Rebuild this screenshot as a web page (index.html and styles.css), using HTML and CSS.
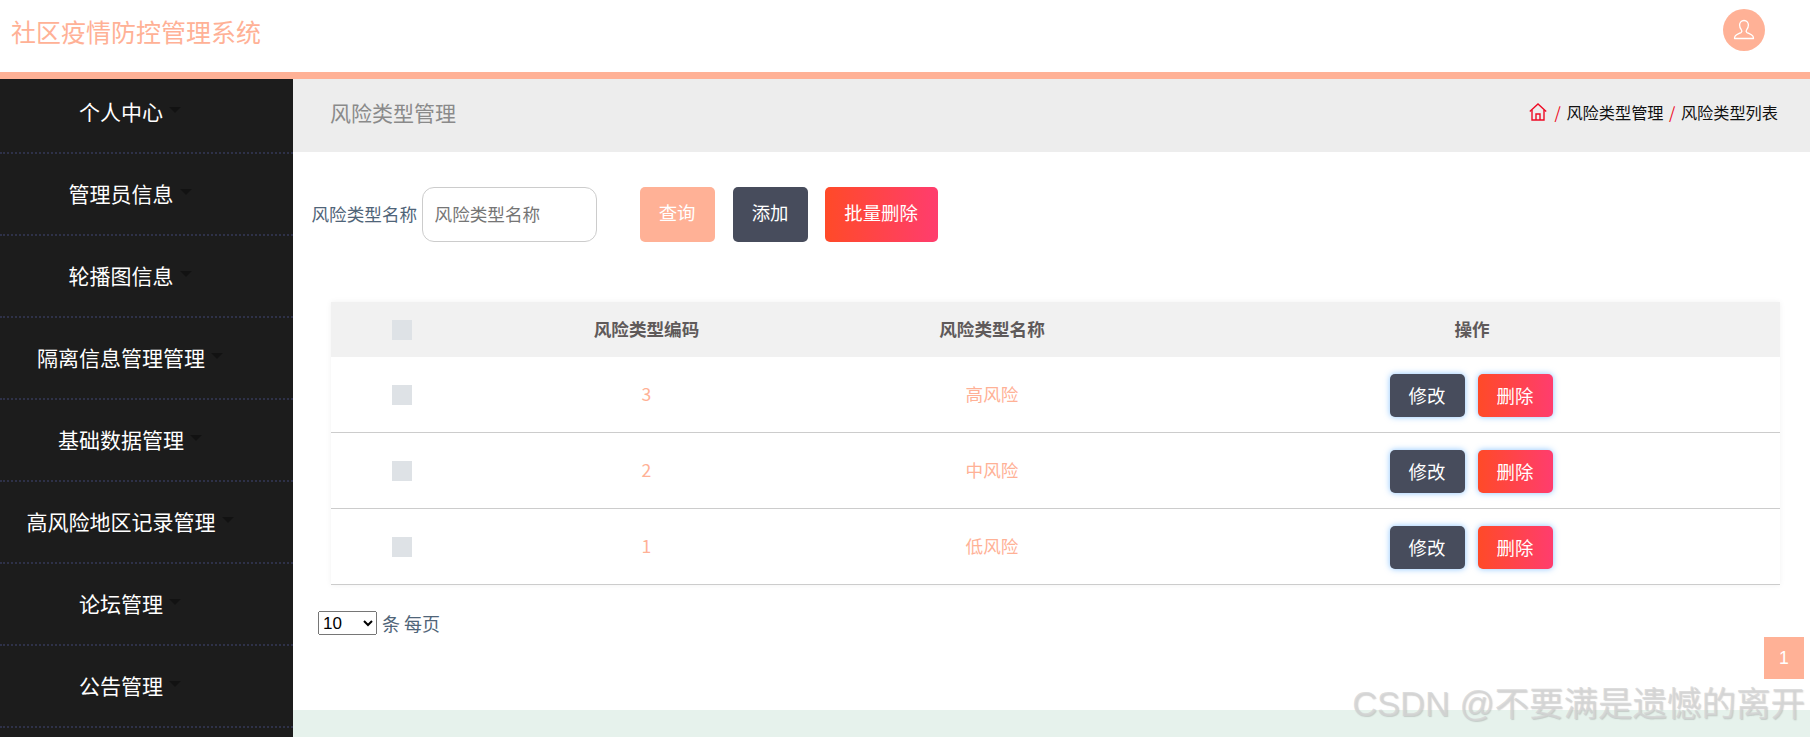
FILE: index.html
```html
<!DOCTYPE html>
<html>
<head>
    <meta charset="utf-8">
    <title>风险类型管理</title>
    <link rel="stylesheet" href="styles.css">
</head>
<body>
    <header class="top-bar">
        <div class="logo">社区疫情防控管理系统</div>
        <div class="avatar">
            <svg width="22" height="22" viewBox="0 0 22 22" fill="none" stroke="#fff" stroke-width="1.3" stroke-linejoin="round">
                <path d="M11 1.500c-2.800 0-4.400 2-4.400 4.600 0 2 .7 3.600 1.800 4.800.5.600.5 1.900-.2 2.500-1 .8-4.700 1.900-5.900 3.400-.6.800-.8 1.800-.8 2.700h19c0-.9-.2-1.900-.8-2.700-1.200-1.500-4.900-2.600-5.900-3.400-.7-.6-.7-1.900-.2-2.500 1.100-1.200 1.800-2.800 1.800-4.800 0-2.600-1.600-4.600-4.400-4.600z"/>
            </svg>
        </div>
    </header>
    <div class="layout">
        <aside class="sidebar">
            <ul class="menu">
                <li class="menu-item"><span>个人中心</span><i class="caret"></i></li>
                <li class="menu-item"><span>管理员信息</span><i class="caret"></i></li>
                <li class="menu-item"><span>轮播图信息</span><i class="caret"></i></li>
                <li class="menu-item"><span>隔离信息管理管理</span><i class="caret"></i></li>
                <li class="menu-item"><span>基础数据管理</span><i class="caret"></i></li>
                <li class="menu-item"><span>高风险地区记录管理</span><i class="caret"></i></li>
                <li class="menu-item"><span>论坛管理</span><i class="caret"></i></li>
                <li class="menu-item"><span>公告管理</span><i class="caret"></i></li>
            </ul>
        </aside>
        <main class="main">
            <div class="crumb-bar">
                <div class="page-title">风险类型管理</div>
                <div class="crumbs">
                    <svg class="home" width="18" height="18" viewBox="0 0 18 18" fill="none" stroke="#ee0a24" stroke-width="1.4">
                        <path d="M.8 8.600 9 1l8.200 7.600"/>
                        <path d="M3 7v10h12V7"/>
                        <path d="M7 17v-6h4v6"/>
                    </svg>
                    <span class="sep">/</span>
                    <span>风险类型管理</span>
                    <span class="sep">/</span>
                    <span>风险类型列表</span>
                </div>
            </div>
            <div class="content">
                <div class="filter">
                    <label class="filter-label">风险类型名称</label>
                    <input class="filter-input" type="text" placeholder="风险类型名称">
                    <button class="btn btn-query">查询</button>
                    <button class="btn btn-dark">添加</button>
                    <button class="btn btn-red btn-wide">批量删除</button>
                </div>
                <table class="data-table">
                    <colgroup>
                        <col class="col-check">
                        <col class="col-code">
                        <col class="col-name">
                        <col class="col-ops">
                    </colgroup>
                    <thead>
                        <tr>
                            <th><span class="check"></span></th>
                            <th>风险类型编码</th>
                            <th>风险类型名称</th>
                            <th>操作</th>
                        </tr>
                    </thead>
                    <tbody>
                        <tr>
                            <td><span class="check"></span></td>
                            <td>3</td>
                            <td>高风险</td>
                            <td class="ops"><button class="btn-row btn-dark">修改</button><button class="btn-row btn-red">删除</button></td>
                        </tr>
                        <tr>
                            <td><span class="check"></span></td>
                            <td>2</td>
                            <td>中风险</td>
                            <td class="ops"><button class="btn-row btn-dark">修改</button><button class="btn-row btn-red">删除</button></td>
                        </tr>
                        <tr>
                            <td><span class="check"></span></td>
                            <td>1</td>
                            <td>低风险</td>
                            <td class="ops"><button class="btn-row btn-dark">修改</button><button class="btn-row btn-red">删除</button></td>
                        </tr>
                    </tbody>
                </table>
                <div class="page-size">
                    <select class="size-select">
                        <option>10</option>
                        <option>20</option>
                        <option>50</option>
                    </select>
                    <span>条 每页</span>
                </div>
                <div class="pager"><span class="page-num">1</span></div>
            </div>
            <div class="foot-band"></div>
        </main>
    </div>
    <div class="watermark">CSDN @不要满是遗憾的离开</div>
</body>
</html>
```
FILE: styles.css
```css
* {
    box-sizing: border-box;
}
html, body {
    height: 737px;
    overflow: hidden;
}
body {
    margin: 0;
    background-color: #ffffff;
    font-family: "Noto Sans CJK SC", "Liberation Sans", sans-serif;
    color: #4f6478;
    position: relative;
}
.top-bar {
    position: relative;
    z-index: 2;
    display: flex;
    align-items: center;
    justify-content: space-between;
    height: 79px;
    padding: 0 45px 0 11px;
    background-color: #ffffff;
    border-bottom: 7px solid #ffb196;
}
.logo {
    font-size: 25px;
    line-height: 1;
    color: #ffb196;
    margin-top: -9px;
}
.avatar {
    display: flex;
    align-items: center;
    justify-content: center;
    width: 42px;
    height: 42px;
    border-radius: 50%;
    background-color: #ffb196;
    margin-top: -12px;
}
.layout {
    display: flex;
    height: 658px;
}
.sidebar {
    width: 293px;
    flex-shrink: 0;
    background-color: #1c1c1c;
}
.menu {
    list-style: none;
    margin: -7px 0 0;
    padding: 0;
}
.menu-item {
    display: flex;
    align-items: center;
    justify-content: center;
    height: 82px;
    padding: 0 33px 2px 0;
    border-bottom: 2px dotted #2e3148;
    font-size: 21px;
    color: #ffffff;
}
.caret {
    width: 0;
    height: 0;
    margin: -2px 0 0 6px;
    border-top: 6px solid #121212;
    border-left: 6px solid transparent;
    border-right: 6px solid transparent;
}
.main {
    flex: 1;
    display: flex;
    flex-direction: column;
    min-width: 0;
}
.crumb-bar {
    display: flex;
    align-items: center;
    justify-content: space-between;
    height: 73px;
    padding: 0 32px 8px 37px;
    background-color: #ededed;
}
.page-title {
    font-size: 21px;
    color: #8a8a8a;
}
.crumbs {
    display: flex;
    align-items: center;
    gap: 5.5px;
    font-size: 16.2px;
    color: #111111;
}
.home {
    margin-right: 2px;
}
.sep {
    color: #ee0a24;
}
.content {
    flex: 1;
    min-height: 0;
}
.filter {
    display: flex;
    align-items: center;
    height: 55px;
    margin: 35px 0 60px 18.5px;
}
.filter-label {
    padding-bottom: 2px;
    font-size: 17.6px;
    color: #4f6478;
}
.filter-input {
    width: 175px;
    height: 55px;
    margin-left: 4.5px;
    padding: 0 12px 3px;
    border: 1.5px solid #cccccc;
    border-radius: 12px;
    font-family: inherit;
    font-size: 17.6px;
    color: #4f6478;
    background-color: #ffffff;
    outline: none;
}
.filter-input::placeholder {
    color: #757575;
}
.btn {
    width: 75px;
    height: 55px;
    margin-left: 18px;
    padding: 0 0 5px;
    border: none;
    border-radius: 5px;
    font-family: inherit;
    font-size: 18.4px;
    color: #ffffff;
}
.btn-query {
    margin-left: 43px;
    background-color: #ffb196;
}
.btn-wide {
    width: 113px;
    margin-left: 17px;
}
.btn-dark {
    background-color: #474c5c;
}
.btn-red {
    background-image: linear-gradient(90deg, #ff4a28, #ff3d6e);
}
.data-table {
    width: 1449px;
    margin-left: 38px;
    border-collapse: separate;
    border-spacing: 0;
    table-layout: fixed;
    box-shadow: 0 0 6px rgba(0, 0, 0, 0.06);
}
.col-check {
    width: 142px;
}
.col-code {
    width: 347px;
}
.col-name {
    width: 344px;
}
.data-table th {
    height: 55px;
    padding: 0 0 2px;
    background-color: #f1f1f1;
    font-size: 17.6px;
    font-weight: 700;
    color: #5f5a5a;
    text-align: center;
}
.data-table td {
    height: 76px;
    padding: 0 0 2px;
    border-bottom: 1px solid #cccccc;
    font-size: 17.6px;
    color: #ffb196;
    text-align: center;
}
.data-table td.ops {
    padding: 2px 2px 0 0;
}
.check {
    display: block;
    width: 20px;
    height: 20px;
    margin: 2px auto 0;
    background-color: #dee2e6;
}
.btn-row {
    width: 75px;
    height: 43px;
    padding: 0 0 2px;
    border: none;
    border-radius: 5px;
    font-family: inherit;
    font-size: 18.4px;
    color: #ffffff;
    box-shadow: 0 0 6px rgba(64, 158, 255, 0.6);
}
.btn-row + .btn-row {
    margin-left: 13px;
}
.page-size {
    display: flex;
    align-items: center;
    gap: 5px;
    margin: 25px 0 0 25px;
    font-size: 18px;
    color: #4f6478;
}
.size-select {
    width: 59px;
    height: 24px;
    font-family: "Liberation Sans", sans-serif;
    font-size: 17px;
}
.pager {
    display: flex;
    justify-content: flex-end;
    margin: 1px 6px 0 0;
}
.page-num {
    display: flex;
    align-items: center;
    justify-content: center;
    width: 40px;
    height: 42px;
    background-color: #ffb196;
    color: #ffffff;
    font-family: "Liberation Sans", sans-serif;
    font-size: 17.6px;
}
.foot-band {
    height: 27px;
    background-color: #e6f2ec;
}
.watermark {
    position: absolute;
    right: 5px;
    top: 681px;
    z-index: 3;
    font-family: "Liberation Sans", "Noto Sans CJK SC", sans-serif;
    font-size: 34.5px;
    line-height: 46px;
    white-space: nowrap;
    color: rgba(212, 212, 212, 0.8);
    text-shadow: 1px 1px 1px rgba(120, 120, 120, 0.3);
}
```
